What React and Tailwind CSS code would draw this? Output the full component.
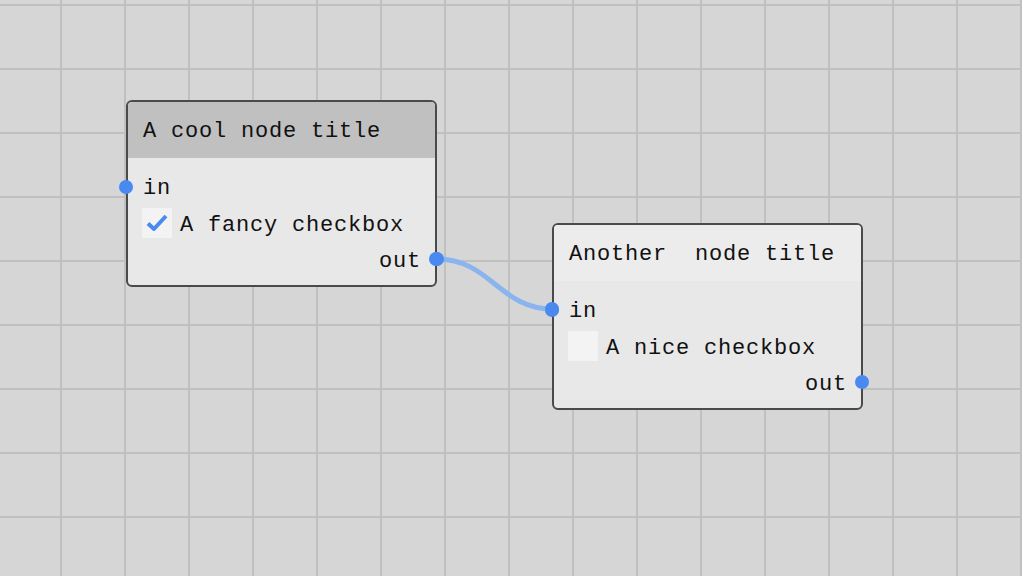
import React, { useState } from 'react';

const font = { fontFamily: '"Liberation Mono", "DejaVu Sans Mono", monospace' };

const Port = ({ side }) => (
  <span
    className={`absolute top-1/2 -translate-y-1/2 w-[14px] h-[14px] rounded-full bg-[#4a8af0] ${
      side === 'left' ? 'left-[-9px]' : 'right-[-8px]'
    }`}
  />
);

const Check = ({ checked, onToggle }) => (
  <button
    onClick={onToggle}
    className="w-[30px] h-[30px] bg-[#f3f3f3] flex items-center justify-center"
  >
    {checked && (
      <svg width="24" height="24" viewBox="0 0 24 24">
        <path d="M3 12.5 L9 18 L21 5" fill="none" stroke="#4a8af0" strokeWidth="4" strokeLinejoin="round" />
      </svg>
    )}
  </button>
);

const Node = ({ title, label, selected, pos, defaultChecked }) => {
  const [checked, setChecked] = useState(defaultChecked);

  return (
    <div
      className={`absolute w-[311px] h-[187px] rounded-[6px] border-2 border-[#4a4a4a] bg-[#e8e8e8] flex flex-col ${pos}`}
    >
      <div
        className={`h-[56px] flex items-center px-[15px] pt-[2px] rounded-t-[4px] text-[22px] tracking-[0.8px] text-[#111] ${
          selected ? 'bg-[#c0c0c0]' : 'bg-[#ececec]'
        }`}
      >
        {title}
      </div>
      <div className="flex flex-col pt-[11px] px-[14px] text-[22px] tracking-[0.8px] text-[#111]">
        <div className="relative h-[36px] flex items-center -mx-[14px] px-[15px]">
          <Port side="left" />
          <span className="relative top-[1px]">in</span>
        </div>
        <div className="h-[36px] flex items-center gap-[8px]">
          <Check checked={checked} onToggle={() => setChecked(!checked)} />
          <span className="relative top-[2px]">{label}</span>
        </div>
        <div className="relative h-[36px] flex items-center justify-end -mx-[14px] px-[14px]">
          <span className="relative top-[2px]">out</span>
          <Port side="right" />
        </div>
      </div>
    </div>
  );
};

export default function App() {
  return (
    <div
      style={font}
      className="relative w-[1022px] h-[576px] overflow-hidden bg-[#d6d6d6] bg-[linear-gradient(to_right,#c0c0c0_2px,transparent_2px),linear-gradient(to_bottom,#c0c0c0_2px,transparent_2px)] bg-[size:64px_64px] bg-[position:60px_4px]"
    >
      <Node
        title="A cool node title"
        label="A fancy checkbox"
        selected
        defaultChecked
        pos="left-[126px] top-[100px]"
      />
      <Node
        title={'Another\u00a0 node title'}
        label="A nice checkbox"
        defaultChecked={false}
        pos="left-[552px] top-[223px]"
      />
      <svg className="absolute left-0 top-0 pointer-events-none" width="1022" height="576">
        <path
          d="M437 259 C 490 259, 500 309, 552 309"
          fill="none"
          stroke="#8ab4ee"
          strokeWidth="5"
        />
        <circle cx="437" cy="259" r="7" fill="#4a8af0" />
        <circle cx="552" cy="309" r="7" fill="#4a8af0" />
      </svg>
    </div>
  );
}
